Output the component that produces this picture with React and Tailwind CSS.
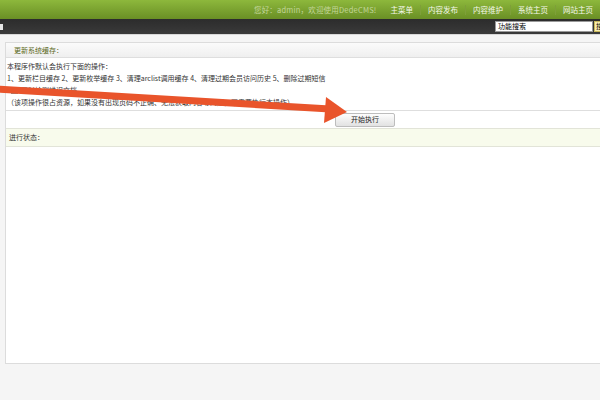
import React from "react"

const menu = ["主菜单", "内容发布", "内容维护", "系统主页", "网站主页"]

const App = () => {
  return (
    <div className="relative w-[600px] h-[400px] overflow-hidden bg-[#f5f5f5] font-['Noto_Sans_CJK_SC','Noto_Sans',sans-serif] text-[#333]">
      {/* Top bar */}
      <header className="h-[19px] bg-gradient-to-b from-[#8db83c] to-[#6a8f25] flex items-center justify-end pr-[7px] text-[7.5px] leading-none">
        <span className="text-[#c3d69b] mr-[14px] tracking-[0.2px]">您好：admin，欢迎使用DedeCMS!</span>
        {menu.map((item, i) => (
          <div key={item} className="flex items-center">
            {i > 0 && <span className="w-px h-[10px] bg-[#7e9f3a] mx-[7px]" />}
            <span className="text-[#f4f8ea]">{item}</span>
          </div>
        ))}
      </header>

      {/* Dark toolbar */}
      <div className="h-[16px] bg-gradient-to-b from-[#2c2c2c] to-[#3a3a3a] flex items-center border-b border-[#d8d8d8] overflow-hidden">
        <span className="w-[3px] h-[6px] bg-[#e5e5e5]" />
        <div className="ml-auto -mr-[24px] flex items-center shrink-0">
          <div className="w-[98px] h-[11px] bg-white border border-[#999] flex items-center px-[2px] text-[7px] leading-none text-black">
            功能搜索
          </div>
          <div className="ml-[1px] w-[30px] h-[11px] bg-[#f6eeb2] border border-[#c9b85c] text-[7px] leading-none flex items-center px-[1px] text-black">
            搜索
          </div>
        </div>
      </div>

      {/* Panel */}
      <div className="ml-[5px] mt-[7px] w-[720px] bg-white border border-[#dcdcdc]">
        <div className="h-[15px] bg-gradient-to-b from-[#fbfbfb] to-[#efefef] border-b border-[#dedede] flex items-center pl-[8px] text-[7px] leading-none text-[#5c6a22]">
          更新系统缓存：
        </div>
        <div className="pl-[1px] pt-[2px] pb-[2px] text-[7px] leading-[12px] border-b border-[#dedede]">
          <div>本程序作默认会执行下面的操作：</div>
          <div>1、更新栏目缓存 2、更新枚举缓存 3、清理arclist调用缓存 4、清理过期会员访问历史 5、删除过期短信</div>
          <div className="flex items-center">
            <span className="ml-[4px] mr-[3px] w-[7px] h-[7px] border border-[#888] bg-white" />
            同时检测错误文档
          </div>
          <div>（该项操作很占资源，如果没有出现页码不正确、无法获取内容等问题，不需要执行本操作）</div>
        </div>
        <div className="h-[17px] flex items-center justify-center">
          <button className="w-[60px] h-[14px] bg-gradient-to-b from-[#fdfdfd] to-[#e2e2e2] border border-[#bdbdbd] rounded-[2px] text-[7px] leading-none text-[#222]">
            开始执行
          </button>
        </div>
        <div className="h-[19px] bg-[#f8fbec] border-t border-b border-[#e2e4d8] flex items-center pl-[3px] text-[7px] leading-none">
          进行状态：
        </div>
        <div className="h-[216px] bg-white" />
      </div>

      {/* Annotation arrow */}
      <svg className="absolute left-0 top-0 pointer-events-none" width="600" height="400" viewBox="0 0 600 400">
        <line x1="-5" y1="89" x2="330" y2="109" stroke="#e9542b" strokeWidth="7" />
        <polygon points="326,97 347,112 324,123" fill="#e9542b" />
      </svg>
    </div>
  )
}

export default App
